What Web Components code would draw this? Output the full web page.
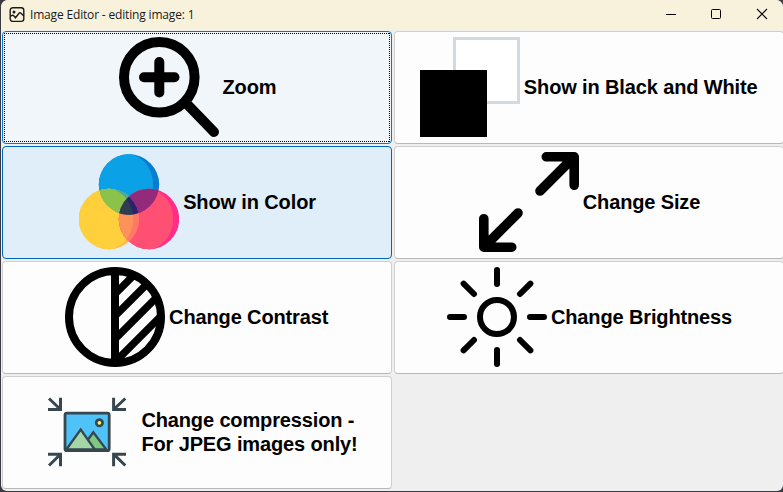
<!DOCTYPE html>
<html lang="en"><head><meta charset="utf-8"><title>Image Editor</title>
<style>html,body{margin:0;width:783px;height:492px;overflow:hidden;background:#3a3944}</style></head>
<body><image-editor></image-editor>
<script>
const icons={
zoom:`<g fill="none" stroke="#000" stroke-width="10" stroke-linecap="round"><circle cx="40.3" cy="40.3" r="35.3"/><path d="M40.3 25V55.5M25 40.3H55.5M66 65L95 95"/></g>`,
bw:`<rect x="34.5" y="1.5" width="64" height="64" fill="#fff" stroke="#d3dadd" stroke-width="3"/><path d="M0 33H67V100H0Z"/>`,
color:`<defs><clipPath id="b"><circle cx="50" cy="32.5" r="30.2"/></clipPath><clipPath id="y"><circle cx="30" cy="67" r="30.2"/></clipPath><clipPath id="p"><circle cx="70" cy="67" r="30.2"/></clipPath></defs>
<g clip-path="url(#b)"><path fill="#087cce" d="M0 0H100V100H0Z"/><ellipse cx="44" cy="32.5" rx="30.2" ry="32" fill="#0aa1e6"/></g>
<g clip-path="url(#y)"><path fill="#ffb850" d="M0 0H100V100H0Z"/><ellipse cx="24" cy="67" rx="30.2" ry="32" fill="#ffd03c"/></g>
<g clip-path="url(#p)"><path fill="#ff2d86" d="M0 0H100V100H0Z"/><ellipse cx="64" cy="67" rx="30.2" ry="32" fill="#ff5074"/></g>
<g clip-path="url(#b)"><circle cx="30" cy="67" r="30.2" fill="#47a996"/><g clip-path="url(#y)"><ellipse cx="24" cy="67" rx="30.2" ry="32" fill="#8bc34a"/></g><circle cx="70" cy="67" r="30.2" fill="#942a7c"/></g>
<g clip-path="url(#y)"><g clip-path="url(#p)"><path fill="#ff7a66" d="M0 0H100V100H0Z"/><ellipse cx="24" cy="67" rx="30.2" ry="32" fill="#ff915a"/><g clip-path="url(#b)"><path fill="#2c2170" d="M0 0H100V100H0Z"/><ellipse cx="24" cy="67" rx="30.2" ry="32" fill="#2d3e50"/></g></g></g>`,
size:`<path d="M67.3 4.8H95.2V33.3M61 39L95 5M39 61L5 95M4.8 66.7V95.2H32.7" fill="none" stroke="#000" stroke-width="9.6" stroke-linecap="round" stroke-linejoin="round"/>`,
contrast:`<defs><clipPath id="c"><path d="M50 2A48 48 0 0 1 50 98Z"/></clipPath></defs><g fill="none" stroke="#000" stroke-width="8"><circle cx="50" cy="50" r="46"/><path d="M50 4V96"/><path clip-path="url(#c)" d="M44 33L84 -7M44 55L94 5M44 78L104 18M44 101L104 41" stroke-width="7.5"/></g>`,
sun:`<g fill="none" stroke="#000" stroke-width="6" stroke-linecap="round"><circle cx="50" cy="50" r="17"/><path d="M50 3V17M50 83V97M3 50H17M83 50H97M16.6 16.6L27 27M73 27L83.4 16.6M16.6 83.4L27 73M73 73L83.4 83.4"/></g>`,
compress:`<g stroke="#37474f" stroke-width="2.8"><rect x="28" y="31.1" width="44.2" height="37.6" rx="2" fill="#4fc3f7"/><path d="M50 59L56.3 50.3L69.3 67.5H55Z" fill="#81c784" stroke-width="2.3"/><path d="M29.3 67.5L43.7 47.5L57.8 67.5Z" fill="#a5d6a7" stroke-width="2.3"/><path d="M28 68.7H72.2"/><circle cx="62.4" cy="40.8" r="3.2" fill="#ffee58" stroke-width="2.7"/><path fill="none" stroke-width="3" d="M11 27.5H23.5V15.7M12 16.5L23.5 27.5M89 27.5H76.6V15.7M88.3 16.5L76.6 27.5M11 72.2H23.5V84.3M12 83.5L23.5 72.2M89 72.2H76.6V84.3M88.3 83.5L76.6 72.2"/></g>`
};
customElements.define('tool-icon',class extends HTMLElement{constructor(){super();this.attachShadow({mode:'open'}).innerHTML=`<style>:host{display:block;width:100px;height:100px;flex:none}svg{display:block}</style><svg width="100" height="100" viewBox="0 0 100 100">${icons[this.getAttribute('name')]||''}</svg>`}});
customElements.define('tool-button',class extends HTMLElement{constructor(){super();this.attachShadow({mode:'open'}).innerHTML=`<style>
:host{box-sizing:border-box;display:flex;align-items:center;justify-content:center;gap:4px;height:113px;padding-bottom:1px;border:1px solid #d0d0d0;border-bottom-color:#b8b8b8;border-radius:4px;background:#fdfdfd;font:bold 20px/24px "Liberation Sans",Arial,sans-serif;letter-spacing:-.13px;color:#000;white-space:nowrap;position:relative}
:host([state=focus]){background:#f1f6fb;border-color:#0078d4}
:host([state=focus])::after{content:"";position:absolute;inset:1px;border:1px solid transparent;background:repeating-linear-gradient(90deg,#000 0 1px,transparent 1px 2px) top/100% 1px no-repeat border-box,repeating-linear-gradient(90deg,#000 0 1px,transparent 1px 2px) bottom/100% 1px no-repeat border-box,repeating-linear-gradient(#000 0 1px,transparent 1px 2px) left/1px 100% no-repeat border-box,repeating-linear-gradient(#000 0 1px,transparent 1px 2px) right/1px 100% no-repeat border-box}
:host([state=hover]){background:#e0eef9;border-color:#0067b8}
tool-icon{margin-left:1px}
tool-icon[name=bw],tool-icon[name=contrast]{margin-left:-.6px}</style><tool-icon name="${this.getAttribute('icon')}"></tool-icon><span><slot></slot></span>`}});
customElements.define('title-bar',class extends HTMLElement{constructor(){super();this.attachShadow({mode:'open'}).innerHTML=`<style>
:host{display:flex;align-items:center;box-sizing:border-box;height:30px;padding:0 0 1px 8px;background:#f8f2dc;color:#1a1a1a;font:12px/20px "Open Sans",sans-serif}span{margin-left:5px;flex:1;white-space:nowrap;letter-spacing:-.17px}svg{display:block}</style>
<svg width="16" height="16" viewBox="0 0 16 16" fill="none" stroke="#1c1c16" stroke-width="1.4"><rect x="1.2" y=".8" width="13.6" height="13.6" rx="2.6"/><circle cx="5" cy="5" r=".8"/><path d="M1.2 9.5L3 8.4Q4 8 5 9L6.5 10.8L10 6.3Q11 5.3 12 6.3L14.8 9"/></svg><span><slot></slot></span>
<svg width="118" height="30" viewBox="0 0 118 30" fill="none" stroke="#000"><path d="M1 14.5H11"/><rect x="46.5" y="9.5" width="9" height="9" rx="1"/><path d="M92 9L102 19M102 9L92 19" stroke-width="1.1"/></svg>`}});
customElements.define('image-editor',class extends HTMLElement{constructor(){super();this.attachShadow({mode:'open'}).innerHTML=`<style>
:host{display:block;box-sizing:border-box;width:782px;height:491px;margin-left:1px;background:#efefef;border-radius:7px 7px 6px 6px;overflow:hidden}
main{display:grid;grid-template-columns:390px 390px;gap:2px;padding:1px 0 0 1px;width:782px}</style>
<title-bar>Image Editor - editing image: 1</title-bar><main>
<tool-button icon="zoom" state="focus">Zoom</tool-button><tool-button icon="bw">Show in Black and White</tool-button>
<tool-button icon="color" state="hover">Show in Color</tool-button><tool-button icon="size">Change Size</tool-button>
<tool-button icon="contrast">Change Contrast</tool-button><tool-button icon="sun">Change Brightness</tool-button>
<tool-button icon="compress">Change compression -<br>For JPEG images only!</tool-button></main>`}});
</script></body></html>
